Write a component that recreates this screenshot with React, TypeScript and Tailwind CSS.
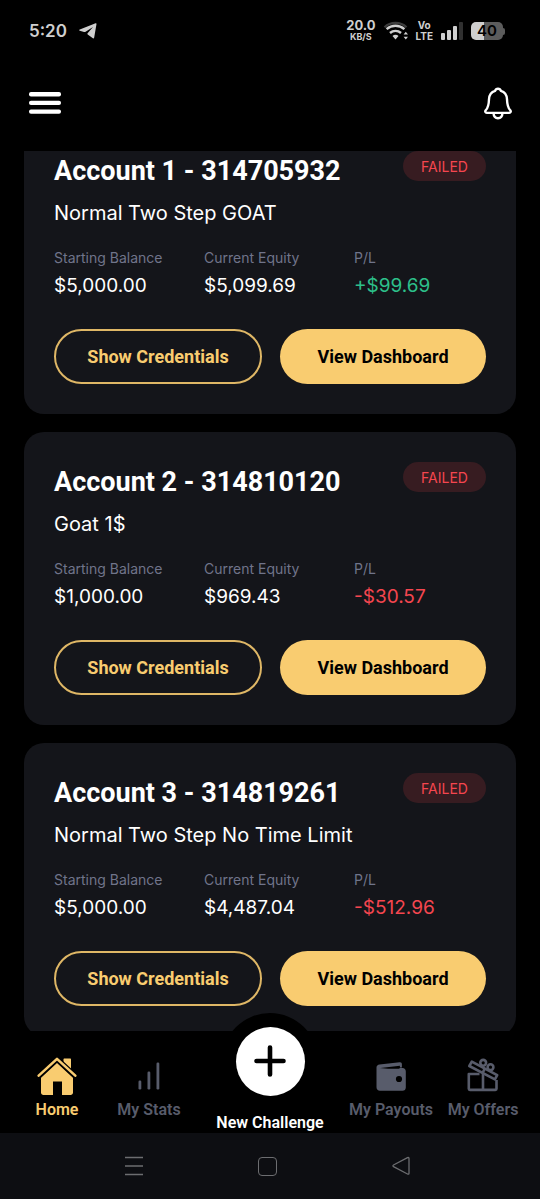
import { useLayoutEffect, useRef } from "react";
import type { ReactNode } from "react";

type Account = {
  title: string;
  plan: string;
  balance: string;
  equity: string;
  pl: string;
};

const accounts: Account[] = [
  { title: "Account 1 - 314705932", plan: "Normal Two Step GOAT", balance: "$5,000.00", equity: "$5,099.69", pl: "+$99.69" },
  { title: "Account 2 - 314810120", plan: "Goat 1$", balance: "$1,000.00", equity: "$969.43", pl: "-$30.57" },
  { title: "Account 3 - 314819261", plan: "Normal Two Step No Time Limit", balance: "$5,000.00", equity: "$4,487.04", pl: "-$512.96" },
];

function StatusBar() {
  return (
    <div className="flex h-[62px] shrink-0 items-center justify-between pr-[35px] pl-[29px] font-['Inter',sans-serif] text-[#cfcfcf]">
      <div className="flex items-center gap-3">
        <span className="text-[17px] leading-6 font-semibold">5:20</span>
        <svg width="18" height="16" viewBox="0 0 18 16" fill="currentColor" aria-hidden="true">
          <path d="M16.6.3c.6-.3 1 .1.9.7l-2.3 13.6c-.1.8-.7 1-1.300.6L8.700 11.400c-.5-.4-.5-.8-.1-1.200L14 4.100 6.600 8.800c-.5.3-1 .4-1.600.2L.8 7.800C0 7.500 0 6.900.8 6.600Z" />
        </svg>
      </div>
      <div className="flex items-center gap-[7px]">
        <div className="flex flex-col items-center font-bold">
          <span className="text-[13px] leading-3">20.0</span>
          <span className="text-[9px] leading-3">KB/S</span>
        </div>
        <svg width="26" height="20" viewBox="0 0 26 20" fill="none" aria-hidden="true">
          <path d="M1.500 6.200C7.500.4 17.500.4 23.500 6.200" stroke="#3c3c3c" strokeWidth="2.200" />
          <path d="M3.600 8.200c5.200-4.600 12.600-4.600 17.800 0M7 12c3.200-2.900 7.800-2.900 11 0" stroke="currentColor" strokeWidth="2.400" />
          <path d="M9.500 15c1.700-1.600 4.300-1.600 6 0l-3 3.600ZM20.600 13.600l2.200-2.800 2.200 2.800ZM20.600 15.800l2.200 2.800 2.200-2.800Z" fill="currentColor" />
        </svg>
        <div className="flex flex-col items-center text-[10px] leading-[11px] font-bold">
          <span>Vo</span>
          <span>LTE</span>
        </div>
        <svg width="24" height="18" viewBox="0 0 24 18" aria-hidden="true">
          <g fill="currentColor">
            <rect x="1" y="11" width="4" height="7" rx="1" />
            <rect x="7" y="8" width="4" height="10" rx="1" />
            <rect x="13" y="4" width="4" height="14" rx="1" />
          </g>
          <rect x="19" y="0" width="4" height="18" rx="1" fill="#303030" />
        </svg>
        <div className="flex items-center">
          <div className="flex h-[18px] w-8 items-center justify-center rounded-[5px] bg-linear-to-r from-[#cfcfcf] from-42% to-[#5c5c5c] to-42% text-[15px] font-semibold text-black">
            40
          </div>
          <div className="h-[7px] w-0.5 rounded-r-full bg-[#5c5c5c]" />
        </div>
      </div>
    </div>
  );
}

function Header() {
  return (
    <header className="flex h-[89px] shrink-0 items-start justify-between px-7 pt-[23px]">
      <button type="button" aria-label="Open menu" className="flex h-9 w-[34px] items-center justify-center">
        <svg width="32" height="22" viewBox="0 0 32 22" fill="#fff" aria-hidden="true">
          <rect width="32" height="4.400" rx="2" />
          <rect y="8.700" width="32" height="4.400" rx="2" />
          <rect y="17.400" width="32" height="4.400" rx="2" />
        </svg>
      </button>
      <button type="button" aria-label="Notifications" className="flex h-9 w-7 items-center justify-center">
        <svg width="28" height="33" viewBox="0 0 28 33" fill="none" stroke="#fff" strokeWidth="2.400" strokeLinejoin="round" aria-hidden="true">
          <path d="M14 1.800c-1.500 0-2.500.8-2.900 2.100C7.300 5 5.200 8.200 5 12.300c-.2 6.100-.7 8.400-3.100 10.700-1.200 1.300-.6 2.900.9 2.900h22.400c1.500 0 2.100-1.600.9-2.900-2.400-2.300-2.900-4.600-3.100-10.700-.2-4.100-2.300-7.300-6.100-8.400-.4-1.300-1.400-2.100-2.900-2.100Z" />
          <path d="M9.500 26c.2 3.300 2 5.200 4.500 5.200s4.300-1.900 4.500-5.200" />
        </svg>
      </button>
    </header>
  );
}

function Stat({ label, value, tone }: { label: string; value: string; tone: string }) {
  return (
    <div className="whitespace-nowrap">
      <dt className="text-[14px] leading-5 text-[#70748a]">{label}</dt>
      <dd className={`mt-1 text-[19px] leading-7 ${tone}`}>{value}</dd>
    </div>
  );
}

function AccountCard({ account }: { account: Account }) {
  const plTone = account.pl.startsWith("+") ? "text-[#2dc08a]" : "text-[#f5464f]";
  return (
    <article className="rounded-[20px] bg-[#14151a] p-[30px] font-['Inter',sans-serif] text-white">
      <div className="flex items-start justify-between">
        <h2 className="font-['Roboto',sans-serif] text-[27px] leading-10 font-bold whitespace-nowrap">{account.title}</h2>
        <span className="flex h-[30px] w-[83px] items-center justify-center rounded-full bg-[#371c21] text-[14px] text-[#f5464f]">
          FAILED
        </span>
      </div>
      <p className="mt-2 text-[20px] leading-7">{account.plan}</p>
      <dl className="mt-[21px] grid grid-cols-3 gap-[18px]">
        <Stat label="Starting Balance" value={account.balance} tone="text-white" />
        <Stat label="Current Equity" value={account.equity} tone="text-white" />
        <Stat label="P/L" value={account.pl} tone={plTone} />
      </dl>
      <div className="mt-[29px] grid grid-cols-[208fr_206fr] gap-[18px] font-['Roboto',sans-serif] text-[18px] font-bold">
        <button type="button" className="h-[55px] rounded-full border-2 border-[#dfb766] text-[#f9cc70]">
          Show Credentials
        </button>
        <button type="button" className="h-[55px] rounded-full bg-[#f9cc70] text-black">
          View Dashboard
        </button>
      </div>
    </article>
  );
}

function NavItem({ label, active, children }: { label: string; active?: boolean; children: ReactNode }) {
  return (
    <a
      href="#"
      aria-current={active ? "page" : undefined}
      className={`flex flex-col items-center gap-[5px] pt-[26px] whitespace-nowrap ${active ? "text-[#f9cc70]" : "text-[#585c6b]"}`}
    >
      <span className="flex h-[38px] items-center">{children}</span>
      <span className="leading-5">{label}</span>
    </a>
  );
}

function BottomNav() {
  return (
    <nav className="relative grid h-[102px] shrink-0 grid-cols-[92fr_92fr_150fr_92fr_92fr] bg-black px-[11px] font-['Roboto',sans-serif] text-[16px] font-semibold">
      <NavItem label="Home" active>
        <svg width="40" height="38" viewBox="0 0 40 38" fill="currentColor" aria-hidden="true">
          <path d="M20 5.600 36 20v15.500c0 1.400-1 2.500-2.500 2.500H25V24.500h-9V38H6.500C5 38 4 36.900 4 35.500V20Z" />
          <path d="M26.500 2.500c0-.6.400-1 1-1H33c.6 0 1 .4 1 1v12l-7.500-6.800Z" />
          <path d="M1.700 19.200 20 2.200l18.300 17" fill="none" stroke="#000" strokeWidth="5.500" />
          <path d="M1.700 18.600 20 1.900l18.300 16.700" fill="none" stroke="currentColor" strokeWidth="2.600" strokeLinecap="round" strokeLinejoin="round" />
        </svg>
      </NavItem>
      <NavItem label="My Stats">
        <svg width="22" height="28" viewBox="0 0 22 28" fill="currentColor" aria-hidden="true">
          <rect x=".5" y="18.500" width="2.800" height="9" rx="1.200" />
          <rect x="9.500" y="9.500" width="2.800" height="18" rx="1.200" />
          <rect x="18.500" y=".5" width="2.800" height="27" rx="1.200" />
        </svg>
      </NavItem>
      <a href="#" className="flex flex-col items-center justify-end whitespace-nowrap text-white">
        <span className="absolute -top-[18px] flex size-24 items-center justify-center rounded-full bg-black">
          <span className="flex size-[69px] items-center justify-center rounded-full bg-white">
            <svg width="32" height="32" viewBox="0 0 32 32" fill="none" stroke="#000" strokeWidth="4.600" strokeLinecap="round" aria-hidden="true">
              <path d="M16 2.500v27M2.500 16h27" />
            </svg>
          </span>
        </span>
        <span className="relative leading-5">New Challenge</span>
      </a>
      <NavItem label="My Payouts">
        <svg width="30" height="29" viewBox="0 0 30 29" fill="currentColor" aria-hidden="true">
          <path d="M.5 5.500C.5 3.500 1.800 2.600 3.500 2.400L23.600.2c1.500-.2 2.300.6 2.300 1.900v3.500h-2V3.800L4.500 6.100H26.500c2 0 3.300 1.300 3.300 3.300v16c0 2-1.300 3.300-3.300 3.300H4c-2.100 0-3.500-1.400-3.500-3.500Z" />
          <path d="M3.500 6.800 23.500 5v1.800Z" fill="#000" />
          <circle cx="23" cy="17" r="3.100" fill="#000" />
        </svg>
      </NavItem>
      <NavItem label="My Offers">
        <svg width="34" height="36" viewBox="0 0 34 36" fill="none" stroke="currentColor" strokeWidth="2.600" strokeLinejoin="round" aria-hidden="true">
          <path d="M13.500 16H2.800v14.800c0 .7.400 1.100 1.100 1.100h25.500c.7 0 1.100-.4 1.100-1.100V22M17 15.500V32" />
          <path d="M5.800 3.600 31.200 17.200 28.900 21.400 3.300 8Z" />
          <path d="m19 10.200-2.400 4.800" />
          <circle cx="17.200" cy="4.800" r="2.900" />
          <circle cx="24.500" cy="9.200" r="2.900" />
        </svg>
      </NavItem>
    </nav>
  );
}

function SystemNav() {
  return (
    <div className="grid h-[66px] shrink-0 grid-cols-3 items-center justify-items-center bg-[#0d0e12] pr-[72px] pl-[67px] text-[#6c6d70]">
      <button type="button" aria-label="Recent apps">
        <svg width="18" height="20" viewBox="0 0 18 20" stroke="currentColor" strokeWidth="1.500" aria-hidden="true">
          <path d="M0 1.500h18M0 10h18M0 18.500h18" />
        </svg>
      </button>
      <button type="button" aria-label="Home screen" className="size-[19px] rounded-[4px] border border-current" />
      <button type="button" aria-label="Back">
        <svg width="18" height="20" viewBox="0 0 18 20" fill="none" stroke="currentColor" strokeWidth="1.300" strokeLinejoin="round" aria-hidden="true">
          <path d="M15.500 1.700 1.500 9c-.8.500-.8 1.200 0 1.700l14 7.300c.9.400 1.500.1 1.500-.8V2.500c0-.9-.6-1.200-1.500-.8Z" />
        </svg>
      </button>
    </div>
  );
}

export default function App() {
  const listRef = useRef<HTMLElement>(null);

  useLayoutEffect(() => {
    if (listRef.current) listRef.current.scrollTop = 30;
  }, []);

  return (
    <div className="flex h-screen flex-col bg-black">
      <StatusBar />
      <Header />
      <main ref={listRef} className="min-h-0 flex-1 overflow-y-auto px-6 [scrollbar-width:none]">
        <div className="flex flex-col gap-[18px]">
          {accounts.map((account) => (
            <AccountCard key={account.title} account={account} />
          ))}
        </div>
      </main>
      <BottomNav />
      <SystemNav />
    </div>
  );
}
